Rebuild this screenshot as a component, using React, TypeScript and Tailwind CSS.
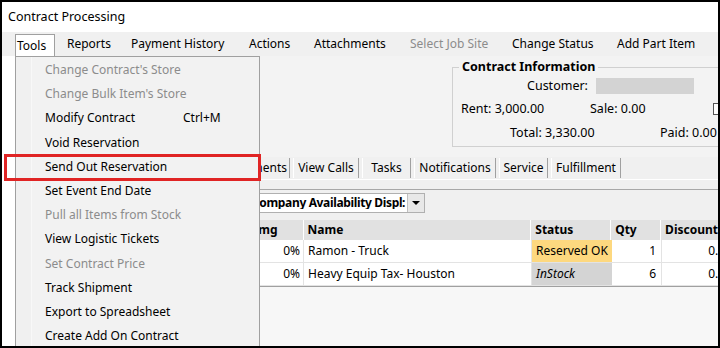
import React from "react";

const font = { fontFamily: '"Noto Sans", "Open Sans", Arial, sans-serif' };

type MI = { label: string; disabled?: boolean; shortcut?: string };
const menuItems: MI[] = [
  { label: "Change Contract's Store", disabled: true },
  { label: "Change Bulk Item's Store", disabled: true },
  { label: "Modify Contract", shortcut: "Ctrl+M" },
  { label: "Void Reservation" },
  { label: "Send Out Reservation" },
  { label: "Set Event End Date" },
  { label: "Pull all Items from Stock", disabled: true },
  { label: "View Logistic Tickets" },
  { label: "Set Contract Price", disabled: true },
  { label: "Track Shipment" },
  { label: "Export to Spreadsheet" },
  { label: "Create Add On Contract" },
];

const topMenu: { label: string; w: string; disabled?: boolean }[] = [
  { label: "Reports", w: "w-[64px]" },
  { label: "Payment History", w: "w-[118px]" },
  { label: "Actions", w: "w-[65px]" },
  { label: "Attachments", w: "w-[96px]" },
  { label: "Select Job Site", w: "w-[102px]", disabled: true },
  { label: "Change Status", w: "w-[105px]" },
  { label: "Add Part Item", w: "w-[100px]" },
];

const tabs: { label: string; w: string }[] = [
  { label: "View Calls", w: "w-[66px]" },
  { label: "Tasks", w: "w-[49px]" },
  { label: "Notifications", w: "w-[82px]" },
  { label: "Service", w: "w-[49px]" },
  { label: "Fulfillment", w: "w-[70px]" },
];

export default function App() {
  return (
    <div
      className="w-[720px] h-[348px] border-2 border-black bg-white relative overflow-hidden text-[12px] text-black leading-none"
      style={font}
    >
      {/* Title bar */}
      <div className="h-[30px] bg-white flex items-center pl-[6px] text-[12.5px]">
        Contract Processing
      </div>

      {/* Menu bar */}
      <div className="h-[24px] bg-[#f0f0f0] flex items-stretch">
        <div className="ml-[13px] mt-[2px] w-[40px] bg-white border border-b-0 border-[#a0a0a0] flex items-center pl-[1px]">
          Tools
        </div>
        <div className="w-[12px]" />
        {topMenu.map((m) => (
          <div
            key={m.label}
            className={`${m.w} flex items-center whitespace-nowrap ${m.disabled ? "text-[#8c8c8c]" : ""}`}
          >
            {m.label}
          </div>
        ))}
      </div>

      {/* Body */}
      <div className="h-[290px] bg-white flex">
        <div className="w-[13px] bg-white" />
        <div className="flex-1 flex flex-col min-w-0">
          {/* Top info area */}
          <div className="h-[101px] flex bg-[#f3f3f3]">
            <div className="ml-[437px] mt-[11px] w-[280px] h-[80px] border border-[#d0d0d0] relative shrink-0">
              <div className="absolute -top-[7px] left-[6px] bg-[#f3f3f3] px-[3px] font-bold text-[12.5px]">
                Contract Information
              </div>
              <div className="flex items-center mt-[10px] h-[16px]">
                <div className="ml-[74px] text-[12.5px]">Customer:</div>
                <div className="ml-[8px] w-[98px] h-[16px] bg-[#d3d3d3]" />
              </div>
              <div className="flex items-center mt-[3px] h-[24px] text-[12.5px]">
                <div className="ml-[8px] w-[129px] whitespace-nowrap">Rent: 3,000.00</div>
                <div className="w-[123px] whitespace-nowrap">Sale: 0.00</div>
                <div className="w-[12px] h-[12px] border border-[#555] bg-white" />
              </div>
              <div className="flex items-center h-[24px] text-[12.5px]">
                <div className="ml-[57px] w-[150px] whitespace-nowrap">Total: 3,330.00</div>
                <div className="whitespace-nowrap">Paid: 0.00</div>
              </div>
            </div>
          </div>

          {/* Tabs */}
          <div className="h-[22px] bg-[#f0f0f0] flex items-stretch">
            <div className="ml-[197px] w-[78px] flex items-center justify-end pr-[2px] border-r border-[#a0a0a0] my-[1px]">
              Payments
            </div>
            {tabs.map((t) => (
              <div
                key={t.label}
                className={`${t.w} ml-[3px] my-[1px] flex items-center justify-center border-l border-white border-r border-r-[#a0a0a0] whitespace-nowrap`}
              >
                {t.label}
              </div>
            ))}
          </div>
          <div className="h-[1px] bg-white" />
          <div className="h-[9px] bg-[#f0f0f0]" />
          <div className="h-[1px] bg-[#a8a8a8]" />

          {/* Panel */}
          <div className="flex-1 bg-[#f7f7f7] flex flex-col">
            <div className="h-[30px] bg-[#f0f0f0] flex items-start pt-[3px]">
              <div className="ml-[232px] w-[178px] h-[20px] bg-white border border-[#b0b0b0] flex items-center">
                <div className="flex-1 min-w-0 font-bold pl-[4px] whitespace-nowrap overflow-hidden tracking-[-0.35px]">
                  Company Availability Displ:
                </div>
                <div className="w-[17px] h-[18px] bg-[#e8e8e8] border-l border-[#c0c0c0] flex items-center justify-center shrink-0">
                  <div className="w-0 h-0 border-l-[4px] border-r-[4px] border-t-[4px] border-l-transparent border-r-transparent border-t-black" />
                </div>
              </div>
            </div>
            {/* Grid */}
            <div className="flex flex-col">
              <div className="h-[20px] bg-[#e1e1e1] flex font-bold">
                <div className="w-[289px] flex items-center justify-end pr-[25px] border-r border-white">Dmg</div>
                <div className="w-[228px] flex items-center pl-[4px] border-r border-white">Name</div>
                <div className="w-[80px] flex items-center pl-[4px] border-r border-white">Status</div>
                <div className="w-[50px] flex items-center pl-[4px] border-r border-white">Qty</div>
                <div className="flex-1 flex items-center pl-[4px] whitespace-nowrap">Discount</div>
              </div>
              {[
                { name: "Ramon - Truck", status: "Reserved OK", qty: "1", bg: "bg-[#fdd87f]", italic: false },
                { name: "Heavy Equip Tax- Houston", status: "InStock", qty: "6", bg: "bg-[#d4d4d4]", italic: true },
              ].map((r) => (
                <div key={r.name} className="h-[23px] bg-white flex border-b border-[#e3e3e3]">
                  <div className="w-[289px] flex items-center justify-end pr-[3px] border-r border-[#e3e3e3]">0%</div>
                  <div className="w-[228px] flex items-center pl-[4px] border-r border-[#e3e3e3] whitespace-nowrap">{r.name}</div>
                  <div className={`w-[80px] flex items-center pl-[4px] ${r.bg} ${r.italic ? "italic" : ""}`}>{r.status}</div>
                  <div className="w-[50px] flex items-center justify-end pr-[5px] border-r border-[#e3e3e3]">{r.qty}</div>
                  <div className="flex-1 flex items-center justify-end whitespace-nowrap overflow-hidden">
                    <span className="mr-[-14px]">0.00</span>
                  </div>
                </div>
              ))}
              <div className="h-[1px] bg-[#a0a0a0]" />
            </div>
          </div>
        </div>
      </div>

      {/* Dropdown menu */}
      <div className="absolute left-[13px] top-[54px] w-[245px] h-[300px] bg-[#f2f2f2] border border-[#a0a0a0] flex">
        <div className="w-[16px] bg-[#f0f0f0] border-r border-[#f8f8f8]" />
        <div className="flex-1 pt-[1px]">
          {menuItems.map((m) => (
            <div
              key={m.label}
              className={`h-[24.2px] flex items-center pl-[13px] whitespace-nowrap ${m.disabled ? "text-[#8c8c8c]" : ""}`}
            >
              <span className="w-[138px]">{m.label}</span>
              {m.shortcut && <span>{m.shortcut}</span>}
            </div>
          ))}
        </div>
      </div>

      {/* Red highlight */}
      <div className="absolute left-[2px] top-[152px] w-[257px] h-[27px] border-[3px] border-[#e02424]" />
    </div>
  );
}
